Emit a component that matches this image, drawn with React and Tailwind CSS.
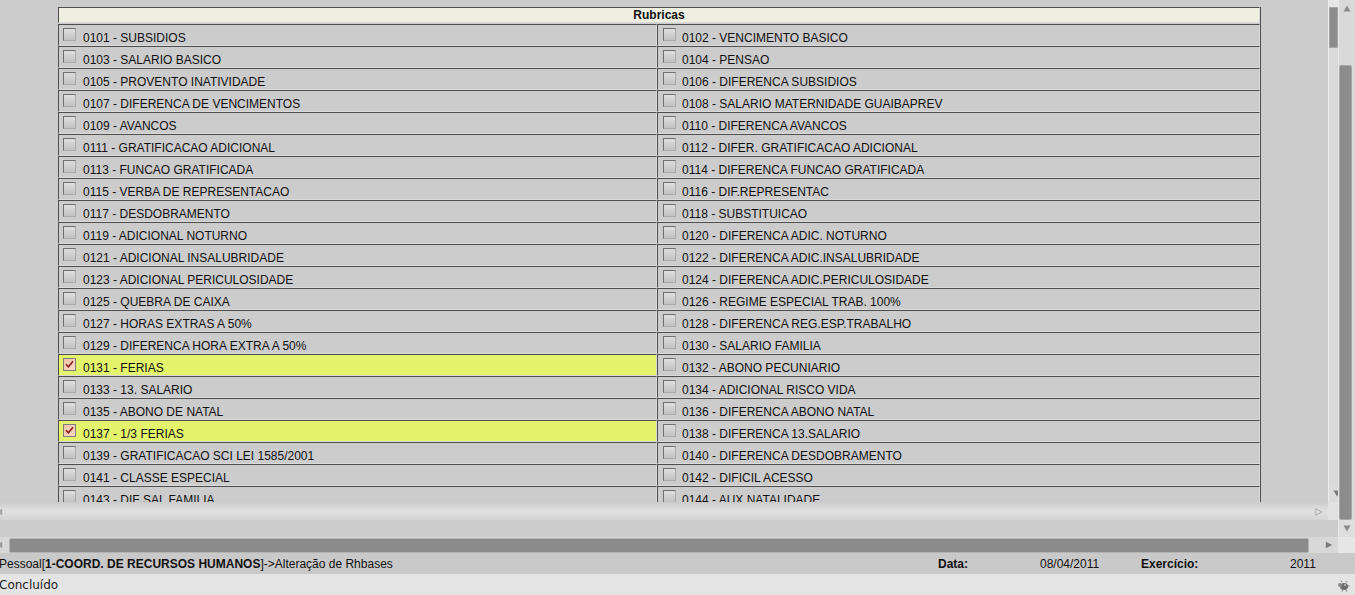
import React from "react";

const rows = [
  ["0101 - SUBSIDIOS", "0102 - VENCIMENTO BASICO"],
  ["0103 - SALARIO BASICO", "0104 - PENSAO"],
  ["0105 - PROVENTO INATIVIDADE", "0106 - DIFERENCA SUBSIDIOS"],
  ["0107 - DIFERENCA DE VENCIMENTOS", "0108 - SALARIO MATERNIDADE GUAIBAPREV"],
  ["0109 - AVANCOS", "0110 - DIFERENCA AVANCOS"],
  ["0111 - GRATIFICACAO ADICIONAL", "0112 - DIFER. GRATIFICACAO ADICIONAL"],
  ["0113 - FUNCAO GRATIFICADA", "0114 - DIFERENCA FUNCAO GRATIFICADA"],
  ["0115 - VERBA DE REPRESENTACAO", "0116 - DIF.REPRESENTAC"],
  ["0117 - DESDOBRAMENTO", "0118 - SUBSTITUICAO"],
  ["0119 - ADICIONAL NOTURNO", "0120 - DIFERENCA ADIC. NOTURNO"],
  ["0121 - ADICIONAL INSALUBRIDADE", "0122 - DIFERENCA ADIC.INSALUBRIDADE"],
  ["0123 - ADICIONAL PERICULOSIDADE", "0124 - DIFERENCA ADIC.PERICULOSIDADE"],
  ["0125 - QUEBRA DE CAIXA", "0126 - REGIME ESPECIAL TRAB. 100%"],
  ["0127 - HORAS EXTRAS A 50%", "0128 - DIFERENCA REG.ESP.TRABALHO"],
  ["0129 - DIFERENCA HORA EXTRA A 50%", "0130 - SALARIO FAMILIA"],
  ["0131 - FERIAS", "0132 - ABONO PECUNIARIO"],
  ["0133 - 13. SALARIO", "0134 - ADICIONAL RISCO VIDA"],
  ["0135 - ABONO DE NATAL", "0136 - DIFERENCA ABONO NATAL"],
  ["0137 - 1/3 FERIAS", "0138 - DIFERENCA 13.SALARIO"],
  ["0139 - GRATIFICACAO SCI LEI 1585/2001", "0140 - DIFERENCA DESDOBRAMENTO"],
  ["0141 - CLASSE ESPECIAL", "0142 - DIFICIL ACESSO"],
  ["0143 - DIF SAL FAMILIA", "0144 - AUX NATALIDADE"],
];

const checkedSet = new Set(["0131 - FERIAS", "0137 - 1/3 FERIAS"]);

function Checkbox({ checked }) {
  if (checked) {
    return (
      <div className="w-[13px] h-[13px] shrink-0 border border-[#7d7d7d] bg-gradient-to-br from-[#f6c3a6] to-[#f9d9c6] flex items-center justify-center">
        <svg width="9" height="9" viewBox="0 0 9 9">
          <path d="M1 4.2 L3.4 6.8 L8 1.2" fill="none" stroke="#8a1c1c" strokeWidth="1.6" />
        </svg>
      </div>
    );
  }
  return (
    <div className="w-[13px] h-[13px] shrink-0 border border-t-[#6f6f6f] border-l-[#6f6f6f] border-r-[#a9a9a9] border-b-[#a9a9a9] bg-gradient-to-b from-[#dedede] to-[#c2c2c2]" />
  );
}

function Cell({ label, width, boxMl, textMl }) {
  const checked = checkedSet.has(label);
  return (
    <div
      className={`${width} h-[22px] flex items-start border-t border-l border-r border-b border-t-[#4e4e4e] border-l-[#4e4e4e] border-r-[#dadada] border-b-[#dadada] ${
        checked ? "bg-[#e4f36c]" : ""
      }`}
    >
      <div className={`${boxMl} mt-[3px]`}>
        <Checkbox checked={checked} />
      </div>
      <span className={`${textMl} pt-[6px] leading-[14px] text-[12px] text-[#101010] whitespace-nowrap`}>
        {label}
      </span>
    </div>
  );
}

function TriUp({ color = "#8a8a8a" }) {
  return (
    <svg width="8" height="7" viewBox="0 0 8 7">
      <path d="M4 0.5 L7.5 6.5 L0.5 6.5 Z" fill={color} />
    </svg>
  );
}
function TriDown({ color = "#8a8a8a" }) {
  return (
    <svg width="8" height="7" viewBox="0 0 8 7">
      <path d="M0.5 0.5 L7.5 0.5 L4 6.5 Z" fill={color} />
    </svg>
  );
}
function TriRight({ color = "#8a8a8a", outline = false }) {
  return (
    <svg width="8" height="8" viewBox="0 0 8 8">
      <path
        d="M0.8 0.8 L7.2 4 L0.8 7.2 Z"
        fill={outline ? "none" : color}
        stroke={color}
        strokeWidth={outline ? 1 : 0}
      />
    </svg>
  );
}
function TriLeft({ color = "#8a8a8a" }) {
  return (
    <svg width="8" height="8" viewBox="0 0 8 8">
      <path d="M7.2 0.8 L0.8 4 L7.2 7.2 Z" fill={color} />
    </svg>
  );
}

export default function App() {
  return (
    <div
      className="w-[1355px] h-[595px] bg-[#cccccc] flex flex-col overflow-hidden"
      style={{ fontFamily: '"Liberation Sans", Arial, sans-serif' }}
    >
      {/* top area */}
      <div className="h-[537px] flex">
        <div className="w-[1338px] flex flex-col">
          {/* inner frame */}
          <div className="h-[520px] flex flex-col">
            <div className="h-[502px] flex">
              <div className="w-[1328px] h-[502px] overflow-hidden bg-[#cccccc]">
                <div className="ml-[58px] mt-[7px] w-[1203px] border-r border-[#4e4e4e]">
                  <div className="h-[16px] w-[1202px] border-t border-l border-r border-b border-t-[#4e4e4e] border-l-[#4e4e4e] border-r-[#dadada] border-b-[#dadada] bg-[#eeeee1] flex items-center justify-center">
                    <span className="text-[12px] leading-[14px] font-bold text-[#101010]">Rubricas</span>
                  </div>
                  <div className="h-[1px]" />
                  {rows.map(([l, r]) => (
                    <div key={l} className="flex">
                      <Cell label={l} width="w-[599px]" boxMl="ml-[4px]" textMl="ml-[7px]" />
                      <Cell label={r} width="w-[603px]" boxMl="ml-[5px]" textMl="ml-[6px]" />
                    </div>
                  ))}
                </div>
              </div>
              {/* inner vertical scrollbar */}
              <div className="w-[10px] h-[502px] bg-[#dadada] border-l border-[#ececec] flex flex-col overflow-hidden">
                <div className="h-[7px] bg-[#e6e6e6]" />
                <div className="h-[41px] bg-[#8c8c8c] border border-[#a6a6a6]" />
                <div className="flex-1" />
                <div className="h-[17px] pl-[4px] pt-[5px] bg-[#dcdcdc]">
                  <TriDown color="#7c7c7c" />
                </div>
              </div>
            </div>
            {/* inner horizontal scrollbar */}
            <div className="h-[18px] flex">
              <div className="w-[1328px] h-[18px] bg-gradient-to-b from-[#cbcbcb] via-[#e2e2e2] to-[#d4d4d4] flex items-center">
                <div className="ml-[-5px] mt-[1px]">
                  <TriLeft color="#a8a8a8" />
                </div>
                <div className="flex-1" />
                <div className="mr-[5px] mt-[1px]">
                  <TriRight color="#acacac" outline />
                </div>
              </div>
              <div className="w-[10px] h-[18px] bg-[#e2e2e2]" />
            </div>
          </div>
          {/* gray band */}
          <div className="h-[17px] bg-[#cccccc]" />
        </div>
        {/* outer vertical scrollbar */}
        <div className="w-[17px] h-[537px] bg-[#d9d9d9] border-l border-[#e6e6e6] flex flex-col">
          <div className="h-[17px] pl-[4px] pt-[5px]">
            <TriUp color="#8a8a8a" />
          </div>
          <div className="h-[48px]" />
          <div className="h-[455px] w-[13px] bg-[#8c8c8c] border border-[#a8a8a8] rounded-[2px]" />
          <div className="h-[17px] pl-[4px] pt-[5px] bg-[#dedede]">
            <TriDown color="#8a8a8a" />
          </div>
        </div>
      </div>
      {/* outer horizontal scrollbar */}
      <div className="h-[16px] flex">
        <div className="w-[1338px] h-[16px] bg-[#d8d8d8] flex items-center">
          <div className="ml-[-5px]">
            <TriLeft color="#9a9a9a" />
          </div>
          <div className="ml-[6px] w-[1300px] h-[15px] mt-[1px] bg-[#8b8b8b] border border-[#b4b4b4] rounded-[2px]" />
          <div className="flex-1" />
          <div className="mr-[5px]">
            <TriRight color="#7a7a7a" />
          </div>
        </div>
        <div className="w-[17px] h-[16px] bg-[#e6e6e6]" />
      </div>
      {/* app status row */}
      <div className="h-[21px] bg-[#c9c9c9] flex items-center text-[12px] leading-[14px] text-[#101010] whitespace-nowrap">
        <div className="w-[938px] ml-[-1px] pl-0">
          Pessoal[<span className="font-bold">1-COORD. DE RECURSOS HUMANOS</span>]-&gt;Alteração de Rhbases
        </div>
        <div className="w-[102px] ml-[1px] font-bold">Data:</div>
        <div className="w-[101px]">08/04/2011</div>
        <div className="w-[149px] font-bold">Exercício:</div>
        <div>2011</div>
      </div>
      {/* browser status bar */}
      <div
        className="h-[21px] bg-[#e4e4e4] flex items-center text-[12px] text-[#1a1a1a]"
        style={{ fontFamily: '"DejaVu Sans", sans-serif' }}
      >
        <span className="ml-[-1px]">Concluído</span>
        <div className="flex-1" />
        <div className="mr-[5px] mt-[2px]">
          <svg width="14" height="12" viewBox="0 0 14 12">
            <ellipse cx="8" cy="6.5" rx="4" ry="3.5" fill="#6e6e6e" />
            <circle cx="4" cy="5" r="2" fill="#8a8a8a" />
            <path d="M6 2 L5 0.5 M10 2.5 L11.5 1 M7 10 L6 11.5 M10 10 L11 11.5 M12 6 L13.5 6" stroke="#777" strokeWidth="1" />
            <circle cx="9" cy="5" r="1" fill="#bdbdbd" />
          </svg>
        </div>
      </div>
    </div>
  );
}
